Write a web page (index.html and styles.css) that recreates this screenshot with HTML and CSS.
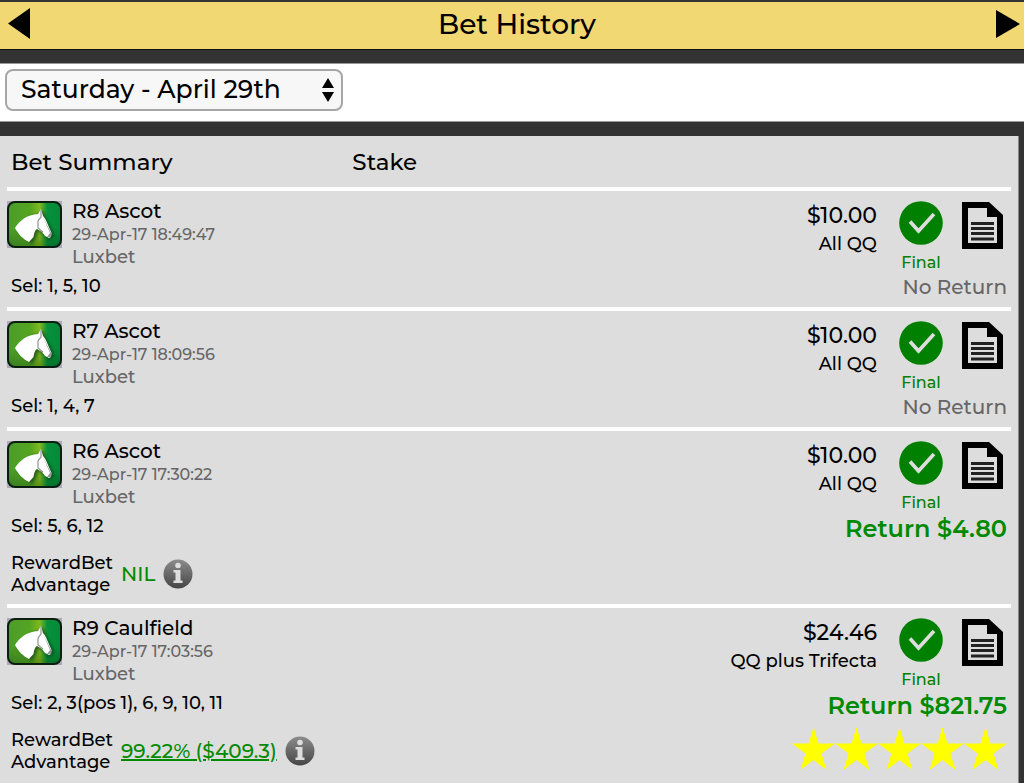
FILE: index.html
```html
<!DOCTYPE html>
<html lang="en">
<head>
  <meta charset="UTF-8">
  <title>Bet History</title>
  <meta name="viewport" content="width=device-width, initial-scale=1.0">
  <link rel="stylesheet" href="styles.css">
</head>
<body>
  <!-- shared icons -->
  <svg class="sprite" aria-hidden="true">
    <defs>
      <linearGradient id="grass" x1="0" y1="0" x2="1" y2="0">
        <stop offset="0" stop-color="#4b9c2c"/>
        <stop offset="0.42" stop-color="#55a522"/>
        <stop offset="0.6" stop-color="#7fba1e"/>
        <stop offset="0.74" stop-color="#07913a"/>
        <stop offset="1" stop-color="#038a38"/>
      </linearGradient>
      <linearGradient id="shade" x1="0" y1="0" x2="0" y2="1">
        <stop offset="0.6" stop-color="#002000" stop-opacity="0"/>
        <stop offset="1" stop-color="#002000" stop-opacity="0.25"/>
      </linearGradient>
      <linearGradient id="grey" x1="0" y1="0" x2="0" y2="1">
        <stop offset="0" stop-color="#8c8c8c"/>
        <stop offset="1" stop-color="#454545"/>
      </linearGradient>
      <filter id="soft" x="-20%" y="-20%" width="150%" height="150%">
        <feGaussianBlur stdDeviation="1.4"/>
      </filter>
    </defs>
    <symbol id="horse" viewBox="0 0 55 47">
      <rect width="55" height="47" fill="#aaa9b4"/>
      <rect x="1" y="1" width="53" height="45" rx="7" fill="url(#grass)"/>
      <rect x="1" y="1" width="53" height="45" rx="7" fill="url(#shade)" stroke="#0b1c10" stroke-width="2"/>
      <path d="M10 30C15 20 24 13 33 13L36 9L39 17L47 33L46 37L41 39L36 33L31 30L29 36L25 43Z" fill="#0a3a12" opacity="0.7" filter="url(#soft)"/>
      <path d="M8 27C12 20 20 13.500 31 13L34 8L36 15C39 18 41 24 44.500 32L44 36L42 37L38 35L35 31L30 28C28 29 27 32 26.500 36L22 41C16 38 11 33 8 27Z" fill="#fff"/>
      <path d="M34 9L34 16L31 20L31 27L36 31" fill="none" stroke="#8f958f" stroke-width="1.200"/>
      <path d="M36 16L44 32L44 36L40 36L43 32Z" fill="#8f958f"/>
    </symbol>
    <symbol id="check" viewBox="0 0 44 44">
      <circle cx="22" cy="22" r="21.800" fill="#008000"/>
      <path d="M11 20.500L19.500 30L35 13" fill="none" stroke="#ddd" stroke-width="3.600"/>
    </symbol>
    <symbol id="doc" viewBox="0 0 43 49">
      <path d="M1 1H28L42 14V48H1Z" fill="#000"/>
      <path d="M7 7H26V16H36V42H7Z" fill="#ddd"/>
      <path d="M10 22.500H33M10 27.500H33M10 32.500H33M10 38H33" stroke="#222" stroke-width="3"/>
    </symbol>
    <symbol id="info" viewBox="0 0 30 30">
      <circle cx="15" cy="15" r="14.500" fill="url(#grey)"/>
      <circle cx="15" cy="6.500" r="2.800" fill="#ddd"/>
      <path d="M10.500 11H17.500V21.500H19.500V24H10.500V21.500H12.500V13.500H10.500Z" fill="#ddd"/>
    </symbol>
    <symbol id="star" viewBox="0 0 43 43">
      <path d="M21.500 0L26.500 16.500H43L29.500 26.500L34.500 43L21.500 33L8.500 43L13.500 26.500L0 16.500H16.500Z" fill="#ff0"/>
    </symbol>
  </svg>

  <header class="topbar">
    <button class="nav-btn" aria-label="Back"><svg width="22" height="31" viewBox="0 0 22 31"><path d="M22 0V31L0 15.500Z"/></svg></button>
    <h1>Bet History</h1>
    <button class="nav-btn" aria-label="Forward"><svg width="24" height="28" viewBox="0 0 24 28"><path d="M0 0V28L24 14Z"/></svg></button>
  </header>

  <div class="filter">
    <div class="select-box">
      <select aria-label="Date">
        <option>Saturday - April 29th</option>
      </select>
      <svg class="select-arrows" width="12" height="24" viewBox="0 0 12 24"><path d="M6 0L12 10H0ZM0 14H12L6 24Z"/></svg>
    </div>
  </div>

  <main class="panel">
    <table class="bets">
      <thead>
        <tr><th class="col-summary">Bet Summary</th><th>Stake</th></tr>
      </thead>
      <tbody>
        <tr>
          <td>
            <div class="event">
              <svg class="horse"><use href="#horse"/></svg>
              <div>
                <div class="race">R8 Ascot</div>
                <div class="date">29-Apr-17 18:49:47</div>
                <div class="bookie">Luxbet</div>
              </div>
            </div>
            <div class="sel">Sel: 1, 5, 10</div>
          </td>
          <td>
            <div class="stake">
              <div class="amount">
                <div class="price">$10.00</div>
                <div class="type">All QQ</div>
              </div>
              <div class="status"><svg class="check"><use href="#check"/></svg>Final</div>
              <button class="doc-btn" aria-label="Bet details"><svg class="doc"><use href="#doc"/></svg></button>
            </div>
            <div class="no-return">No Return</div>
          </td>
        </tr>
        <tr>
          <td>
            <div class="event">
              <svg class="horse"><use href="#horse"/></svg>
              <div>
                <div class="race">R7 Ascot</div>
                <div class="date">29-Apr-17 18:09:56</div>
                <div class="bookie">Luxbet</div>
              </div>
            </div>
            <div class="sel">Sel: 1, 4, 7</div>
          </td>
          <td>
            <div class="stake">
              <div class="amount">
                <div class="price">$10.00</div>
                <div class="type">All QQ</div>
              </div>
              <div class="status"><svg class="check"><use href="#check"/></svg>Final</div>
              <button class="doc-btn" aria-label="Bet details"><svg class="doc"><use href="#doc"/></svg></button>
            </div>
            <div class="no-return">No Return</div>
          </td>
        </tr>
        <tr>
          <td>
            <div class="event">
              <svg class="horse"><use href="#horse"/></svg>
              <div>
                <div class="race">R6 Ascot</div>
                <div class="date">29-Apr-17 17:30:22</div>
                <div class="bookie">Luxbet</div>
              </div>
            </div>
            <div class="sel">Sel: 5, 6, 12</div>
            <div class="reward">
              <div class="reward-label">RewardBet<br>Advantage</div>
              <span class="reward-value">NIL</span>
              <button class="info-btn" aria-label="Info"><svg class="info"><use href="#info"/></svg></button>
            </div>
          </td>
          <td>
            <div class="stake">
              <div class="amount">
                <div class="price">$10.00</div>
                <div class="type">All QQ</div>
              </div>
              <div class="status"><svg class="check"><use href="#check"/></svg>Final</div>
              <button class="doc-btn" aria-label="Bet details"><svg class="doc"><use href="#doc"/></svg></button>
            </div>
            <div class="return">Return $4.80</div>
          </td>
        </tr>
        <tr>
          <td>
            <div class="event">
              <svg class="horse"><use href="#horse"/></svg>
              <div>
                <div class="race">R9 Caulfield</div>
                <div class="date">29-Apr-17 17:03:56</div>
                <div class="bookie">Luxbet</div>
              </div>
            </div>
            <div class="sel">Sel: 2, 3(pos 1), 6, 9, 10, 11</div>
            <div class="reward">
              <div class="reward-label">RewardBet<br>Advantage</div>
              <a class="reward-value" href="#">99.22% ($409.3)</a>
              <button class="info-btn" aria-label="Info"><svg class="info"><use href="#info"/></svg></button>
            </div>
          </td>
          <td>
            <div class="stake">
              <div class="amount">
                <div class="price">$24.46</div>
                <div class="type">QQ plus Trifecta</div>
              </div>
              <div class="status"><svg class="check"><use href="#check"/></svg>Final</div>
              <button class="doc-btn" aria-label="Bet details"><svg class="doc"><use href="#doc"/></svg></button>
            </div>
            <div class="return">Return $821.75</div>
            <div class="stars">
              <svg><use href="#star"/></svg>
              <svg><use href="#star"/></svg>
              <svg><use href="#star"/></svg>
              <svg><use href="#star"/></svg>
              <svg><use href="#star"/></svg>
            </div>
          </td>
        </tr>
      </tbody>
    </table>
  </main>
</body>
</html>
```
FILE: styles.css
```css
* {
  box-sizing: border-box;
}

body {
  margin: 0;
  min-height: 100vh;
  display: flex;
  flex-direction: column;
  background: #333;
  color: #000;
  font-family: Montserrat, Inter, sans-serif;
  font-weight: 500;
  font-size: 18px;
}

svg {
  display: block;
}

button {
  padding: 0;
  border: none;
  background: none;
  cursor: pointer;
}

.sprite {
  position: absolute;
  width: 0;
  height: 0;
}

.topbar {
  display: flex;
  justify-content: space-between;
  align-items: center;
  height: 50px;
  padding: 0 4px 4px 8px;
  border-top: 2px solid #333;
  border-bottom: 1px solid #111;
  background: #f1d873;
}

h1 {
  margin: 0;
  padding-left: 8px;
  font-size: 28px;
  font-weight: 500;
}

.filter {
  margin: 13px 0 14px;
  padding: 5px;
  height: 59px;
  border-top: 1px solid #999;
  border-bottom: 1px solid #999;
  background: #fff;
}

.select-box {
  position: relative;
  width: 338px;
}

select {
  appearance: none;
  width: 100%;
  height: 42px;
  padding: 0 40px 2px 14px;
  border: 2px solid #a6a6a6;
  border-radius: 8px;
  background: #f7f7f7;
  color: #000;
  font-family: inherit;
  font-weight: 500;
  font-size: 25px;
}

.select-arrows {
  position: absolute;
  top: 9px;
  right: 9px;
  pointer-events: none;
}

.panel {
  flex: 1;
  margin-right: 5px;
  padding: 0 7px;
  border-right: 1px solid #888;
  background: #ddd;
}

.bets {
  width: 100%;
  border-spacing: 0;
}

th {
  height: 51px;
  padding: 0 4px;
  font-size: 23px;
  font-weight: 500;
  text-align: left;
}

.col-summary {
  width: 34%;
}

td {
  padding: 8px 4px 8px 0;
  border-top: 4px solid #fff;
  vertical-align: top;
}

.event {
  display: flex;
  gap: 10px;
}

.horse {
  width: 55px;
  height: 47px;
  margin-top: 2px;
}

.race {
  font-size: 20px;
  line-height: 24px;
}

.date {
  color: #666;
  font-size: 16px;
  line-height: 24px;
}

.bookie {
  color: #666;
  font-size: 18px;
  line-height: 20px;
}

.sel {
  margin-top: 7px;
  padding-left: 4px;
  line-height: 24px;
}

.reward {
  display: flex;
  align-items: center;
  gap: 8px;
  margin-top: 14px;
  padding-left: 4px;
}

.reward-label {
  line-height: 22px;
}

.reward-value {
  color: #008a00;
  font-size: 20px;
}

.info {
  width: 30px;
  height: 30px;
}

.stake {
  display: flex;
  justify-content: flex-end;
  padding: 2px 3px 0 0;
  text-align: right;
}

.amount {
  padding-top: 1px;
}

.price {
  font-size: 22px;
  line-height: 28px;
}

.type {
  line-height: 28px;
}

.status {
  display: flex;
  flex-direction: column;
  align-items: center;
  margin: 0 18px 0 22px;
  color: #008000;
  font-size: 16px;
  line-height: 20px;
}

.check {
  width: 44px;
  height: 44px;
  margin-bottom: 8px;
}

.doc-btn {
  align-self: flex-start;
}

.doc {
  width: 43px;
  height: 49px;
}

.no-return,
.return {
  margin-top: 2px;
  text-align: right;
}

.no-return {
  color: #666;
  font-size: 20px;
  line-height: 24px;
}

.return {
  color: #008a00;
  font-size: 24px;
  font-weight: 600;
  line-height: 28px;
}

.stars {
  display: flex;
  justify-content: flex-end;
  margin-top: 7px;
}

.stars svg {
  width: 43px;
  height: 43px;
}
```
